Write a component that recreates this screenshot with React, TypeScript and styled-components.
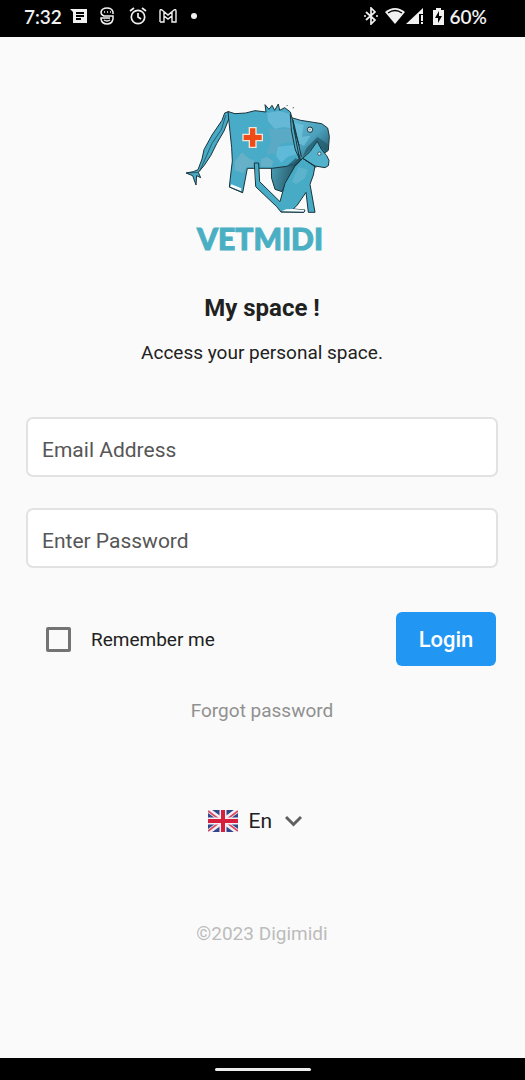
import React from "react";
import styled, { createGlobalStyle } from "styled-components";

const GlobalStyle = createGlobalStyle`
  *, *::before, *::after { box-sizing: border-box; }
  body {
    margin: 0;
    background: #fafafa;
    color: #212121;
    font-family: Roboto, "Liberation Sans", sans-serif;
  }
  button, input, select { font: inherit; color: inherit; }
`;

const Screen = styled.div`
  min-height: 100vh;
  display: flex;
  flex-direction: column;
`;

const StatusBar = styled.header`
  height: 37px;
  padding: 0 38px 5px 24px;
  display: flex;
  align-items: center;
  justify-content: space-between;
  background: #000;
  color: #f1f1f1;
  font-family: Lato, sans-serif;
  font-size: 19px;
  font-weight: 600;
`;

const StatusGroup = styled.div<{ $gap: number }>`
  display: flex;
  align-items: center;
  gap: ${({ $gap }) => $gap}px;
`;

const StatusIcon = styled.svg`
  display: block;
  flex: none;
`;

const Page = styled.main`
  flex: 1;
  display: flex;
  flex-direction: column;
  align-items: center;
  padding: 58px 27px 24px 26px;
`;

const Brand = styled.div`
  display: flex;
  flex-direction: column;
  align-items: center;
  margin-right: 4px;
`;

const BrandName = styled.div`
  margin-top: 2px;
  color: #4bafc4;
  font-family: Lato, sans-serif;
  font-size: 30px;
  font-weight: 900;
  line-height: 32px;
  -webkit-text-stroke: 1px #4bafc4;
`;

const Title = styled.h1`
  margin: 38px 0 0;
  font-size: 24px;
  line-height: 32px;
  font-weight: 700;
`;

const Subtitle = styled.p`
  margin: 17px 0 0;
  font-size: 19px;
  line-height: 24px;
`;

const Form = styled.form`
  width: 100%;
  margin-top: 52px;
  display: flex;
  flex-direction: column;
  align-items: stretch;
`;

const Field = styled.input`
  width: 100%;
  height: 60px;
  margin-bottom: 31px;
  padding: 6px 14px 0;
  border: 2px solid #e2e2e2;
  border-radius: 7px;
  background: #fff;
  font-size: 21px;
  &::placeholder { color: #565656; opacity: 1; }
`;

const Actions = styled.div`
  display: flex;
  align-items: center;
  justify-content: space-between;
  margin-top: 13px;
  padding: 0 2px 0 20px;
`;

const Remember = styled.label`
  display: flex;
  align-items: center;
  gap: 20px;
  font-size: 19px;
`;

const Checkbox = styled.input`
  appearance: none;
  width: 25px;
  height: 25px;
  margin: 0;
  border: 3px solid #737373;
  border-radius: 2px;
  &:checked { background: #2196f3; border-color: #2196f3; }
`;

const LoginButton = styled.button`
  width: 100px;
  height: 54px;
  padding: 0;
  border: 0;
  border-radius: 6px;
  background: #2196f3;
  color: #fff;
  font-size: 22px;
  font-weight: 500;
`;

const ForgotLink = styled.a`
  margin-top: 33px;
  color: #909090;
  font-size: 19px;
  line-height: 24px;
  text-decoration: none;
`;

const Language = styled.label`
  display: flex;
  align-items: center;
  margin-top: 82px;
  margin-right: 15px;
`;

const Flag = styled.svg`
  display: block;
  margin-right: 11px;
`;

const LanguageSelect = styled.select`
  appearance: none;
  width: 36px;
  height: 32px;
  padding: 0;
  border: 0;
  background: transparent;
  font-size: 21px;
`;

const Copyright = styled.footer`
  margin-top: 85px;
  color: #bcbcbc;
  font-size: 19px;
  line-height: 24px;
`;

const NavigationBar = styled.div`
  height: 22px;
  display: flex;
  align-items: center;
  justify-content: center;
  background: #000;
`;

const HomeHandle = styled.div`
  width: 96px;
  height: 3px;
  border-radius: 2px;
  background: #ececec;
`;

function Elephant() {
  return (
    <svg width="160" height="125" viewBox="0 0 480 375" role="img" aria-label="Vetmidi elephant">
      <defs>
        <linearGradient id="head" x1="0" y1="0" x2="0.8" y2="1">
          <stop offset="0" stopColor="#62bbd6" />
          <stop offset="0.55" stopColor="#4ba0bb" />
          <stop offset="1" stopColor="#22586b" />
        </linearGradient>
        <linearGradient id="foreleg" x1="0" y1="0.3" x2="1" y2="0.6">
          <stop offset="0" stopColor="#4a9fb7" />
          <stop offset="1" stopColor="#1f4a58" />
        </linearGradient>
      </defs>
      <g stroke="#1a343c" strokeWidth="3" strokeLinejoin="round" strokeLinecap="round">
        <path fill="#48abc6" d="M145 50 134 54 126 76 96 120 72 164 66 192 54 224 40 230 18 234 38 242 48 270 50 242 62 248 55 232 72 212 92 182 110 146 132 108 148 68Z" />
        <path fill="none" strokeWidth="2" d="M137 62 124 104 96 145 79 184 60 226M22 234 55 232" />
        <path fill="url(#head)" d="M334 68 362 76 400 82 425 86 443 99 448 124 445 166 434 174 370 200 340 190Z" />
        <path fill="url(#foreleg)" d="M275 205 350 160 362 196 345 214 320 262 306 290 285 283 275 250Z" />
        <path fill="#48abc8" d="M145 50 165 56 197 54 225 47 258 51 255 29 267 43 276 31 284 46 295 27 299 46 314 38 331 51 338 76 347 130 358 190 340 206 320 214 276 220 202 220 188 293 148 276 152 240 157 198 155 158 150 110Z" />
      </g>
      <path fill="#6dbddb" d="M262 54 298 48 328 56 334 100 309 96 284 102 264 79Z" opacity=".8" />
      <path fill="#62a9c4" d="M264 100 294 103 333 99 340 141 304 146 289 176 260 178 273 136Z" opacity=".75" />
      <path fill="#69c0df" d="M294 155 342 150 350 178 323 185 304 203 288 183Z" opacity=".7" />
      <path fill="#7cb4c8" d="M164 200 186 172 206 190 222 196 222 215 198 217 190 235 164 226ZM244 192 262 186 280 199 275 215 242 215Z" opacity=".6" />
      <path fill="#245c70" d="M320 214 348 188 354 200 340 215Z" opacity=".75" />
      <path fill="#78cae2" d="M344 84 371 90 366 125 392 122 372 152 355 145Z" opacity=".6" />
      <path fill="#22586c" d="M412 126 444 148 442 172 425 160 412 138 390 165 368 186 380 158Z" opacity=".7" />
      <g stroke="#1a343c" strokeWidth="3" strokeLinejoin="round" strokeLinecap="round">
        <path fill="#48abc6" d="M224 204H236L239 260 300 320 315 265 344 215 368 190 405 213 400 240 390 268 405 352 385 352 378 292 352 330 340 342 375 345 372 352 303 351 290 335 228 276Z" />
        <path fill="#52b1cb" d="M412 140 425 164 440 182 447 196 445 212 435 218 405 213 368 190 389 171Z" />
        <path fill="none" d="M331 58 334 105 346 165 358 190M339 76 350 122 364 184M341 98 357 150M368 190 342 213M372 192 408 217" />
      </g>
      <path fill="#69bbd1" d="M355 216 383 224 374 250 348 268 336 260Z" opacity=".6" />
      <path fill="#fafafa" d="M340 342 373 345 371 350 305 349 318 343ZM154 268 184 280 183 288 151 275Z" />
      <path fill="none" stroke="#1a343c" strokeWidth="2" d="M148 276 188 293M303 351 372 352" />
      <path fill="#f04b16" stroke="#f6e5d3" strokeWidth="4" d="M208 98H228V118H247V137H228V157H208V137H189V118H208Z" />
      <circle cx="390" cy="104" r="8" fill="#e3edf0" stroke="#1a343c" strokeWidth="3" />
      <circle cx="390" cy="104" r="2" fill="#397486" />
      <circle cx="418" cy="176" r="5" fill="#d9eaf0" stroke="#1a343c" strokeWidth="2" />
      <path fill="#41636c" d="M320 30h3v3h-3zM338 37h4v3h-4z" />
    </svg>
  );
}

function NotificationIcons() {
  return (
    <StatusGroup $gap={12}>
      <StatusIcon width="17" height="16" viewBox="0 0 17 16" fill="#f1f1f1" aria-hidden="true">
        <path fillRule="evenodd" d="M0 1H17V15H3V4ZM6 4V6H14V4ZM6 7V9H14V7ZM6 10V12H11V10Z" />
      </StatusIcon>
      <StatusIcon width="18" height="18" viewBox="0 0 18 18" fill="none" stroke="#f1f1f1" strokeWidth="1.5" aria-hidden="true">
        <path d="M14 7V5Q13 1 8 1T2 5Q2 8 5 9H14V12Q13 17 8 17T2 12V11H11M5 5H6M8 5H9M11 5H12M5 13Q8 15 11 13" />
      </StatusIcon>
      <StatusIcon width="18" height="18" viewBox="0 0 18 18" fill="none" stroke="#f1f1f1" strokeWidth="1.7" aria-hidden="true">
        <circle cx="9" cy="10" r="6.7" />
        <path d="M1 4 5 1M13 1 17 4M9 6V10L12 12" />
      </StatusIcon>
      <StatusIcon width="18" height="16" viewBox="0 0 18 16" fill="none" stroke="#f1f1f1" strokeWidth="1.4" aria-hidden="true">
        <path d="M1 14V3Q1 1 3 2L9 7 15 2Q17 1 17 3V14H13V8L9 11 5 8V14H1M5 8V4M13 8V4" />
      </StatusIcon>
      <StatusIcon width="10" height="8" viewBox="0 0 10 8" fill="#f1f1f1" aria-hidden="true">
        <circle cx="5" cy="4" r="3" />
      </StatusIcon>
    </StatusGroup>
  );
}

function SystemIcons() {
  return (
    <>
      <StatusIcon width="16" height="18" viewBox="0 0 16 18" fill="none" stroke="#f1f1f1" strokeWidth="1.7" aria-hidden="true">
        <path d="M3 5 12 13 8 17V1L12 5 3 13M1 9H3M13 9H15" />
      </StatusIcon>
      <StatusIcon width="42" height="18" viewBox="0 0 42 18" aria-hidden="true">
        <path fill="#f1f1f1" d="M0 5Q10-3 20 5L10 17Z" />
        <path fill="none" stroke="#000" strokeWidth="1.3" d="M3 6Q10 1 17 6" />
        <path fill="#f1f1f1" d="M21 17 38 1V7H34V17ZM36 8H38V14H36ZM36 15H38V17H36Z" />
      </StatusIcon>
      <StatusIcon width="11" height="18" viewBox="0 0 11 18" aria-hidden="true">
        <path fill="#f1f1f1" d="M3 1H8V3H11V18H0V3H3Z" />
        <path fill="#000" d="M6 4 2 11H5V16L9 9H6Z" />
      </StatusIcon>
    </>
  );
}

function UnionJack() {
  return (
    <Flag width="30" height="22" viewBox="0 0 30 22" aria-hidden="true">
      <path fill="#30478b" d="M0 0H30V22H0Z" />
      <path stroke="#f5eef3" strokeWidth="5" d="M0 0 30 22M30 0 0 22" />
      <path stroke="#d64961" strokeWidth="1.7" d="M0 1 12 10M18 12 30 21M30 1 18 10M12 12 0 21" />
      <path stroke="#f5eef3" strokeWidth="7" d="M15 0V22M0 11H30" />
      <path stroke="#d51f3d" strokeWidth="4" d="M15 0V22M0 11H30" />
    </Flag>
  );
}

export default function App() {
  return (
    <Screen>
      <GlobalStyle />
      <StatusBar>
        <StatusGroup $gap={8}>
          <span>7:32</span>
          <NotificationIcons />
        </StatusGroup>
        <StatusGroup $gap={6}>
          <SystemIcons />
          <span>60%</span>
        </StatusGroup>
      </StatusBar>
      <Page>
        <Brand>
          <Elephant />
          <BrandName>VETMIDI</BrandName>
        </Brand>
        <Title>My space !</Title>
        <Subtitle>Access your personal space.</Subtitle>
        <Form onSubmit={(event) => event.preventDefault()}>
          <Field type="email" aria-label="Email Address" placeholder="Email Address" />
          <Field type="password" aria-label="Enter Password" placeholder="Enter Password" />
          <Actions>
            <Remember>
              <Checkbox type="checkbox" />
              Remember me
            </Remember>
            <LoginButton type="submit">Login</LoginButton>
          </Actions>
        </Form>
        <ForgotLink href="#forgot">Forgot password</ForgotLink>
        <Language>
          <UnionJack />
          <LanguageSelect aria-label="Language" defaultValue="en">
            <option value="en">En</option>
            <option value="fr">Fr</option>
          </LanguageSelect>
          <svg width="17" height="12" viewBox="0 0 17 12" fill="none" stroke="#606060" strokeWidth="3" aria-hidden="true">
            <path d="M1 2 8.5 9.5 16 2" />
          </svg>
        </Language>
        <Copyright>©2023 Digimidi</Copyright>
      </Page>
      <NavigationBar>
        <HomeHandle />
      </NavigationBar>
    </Screen>
  );
}
